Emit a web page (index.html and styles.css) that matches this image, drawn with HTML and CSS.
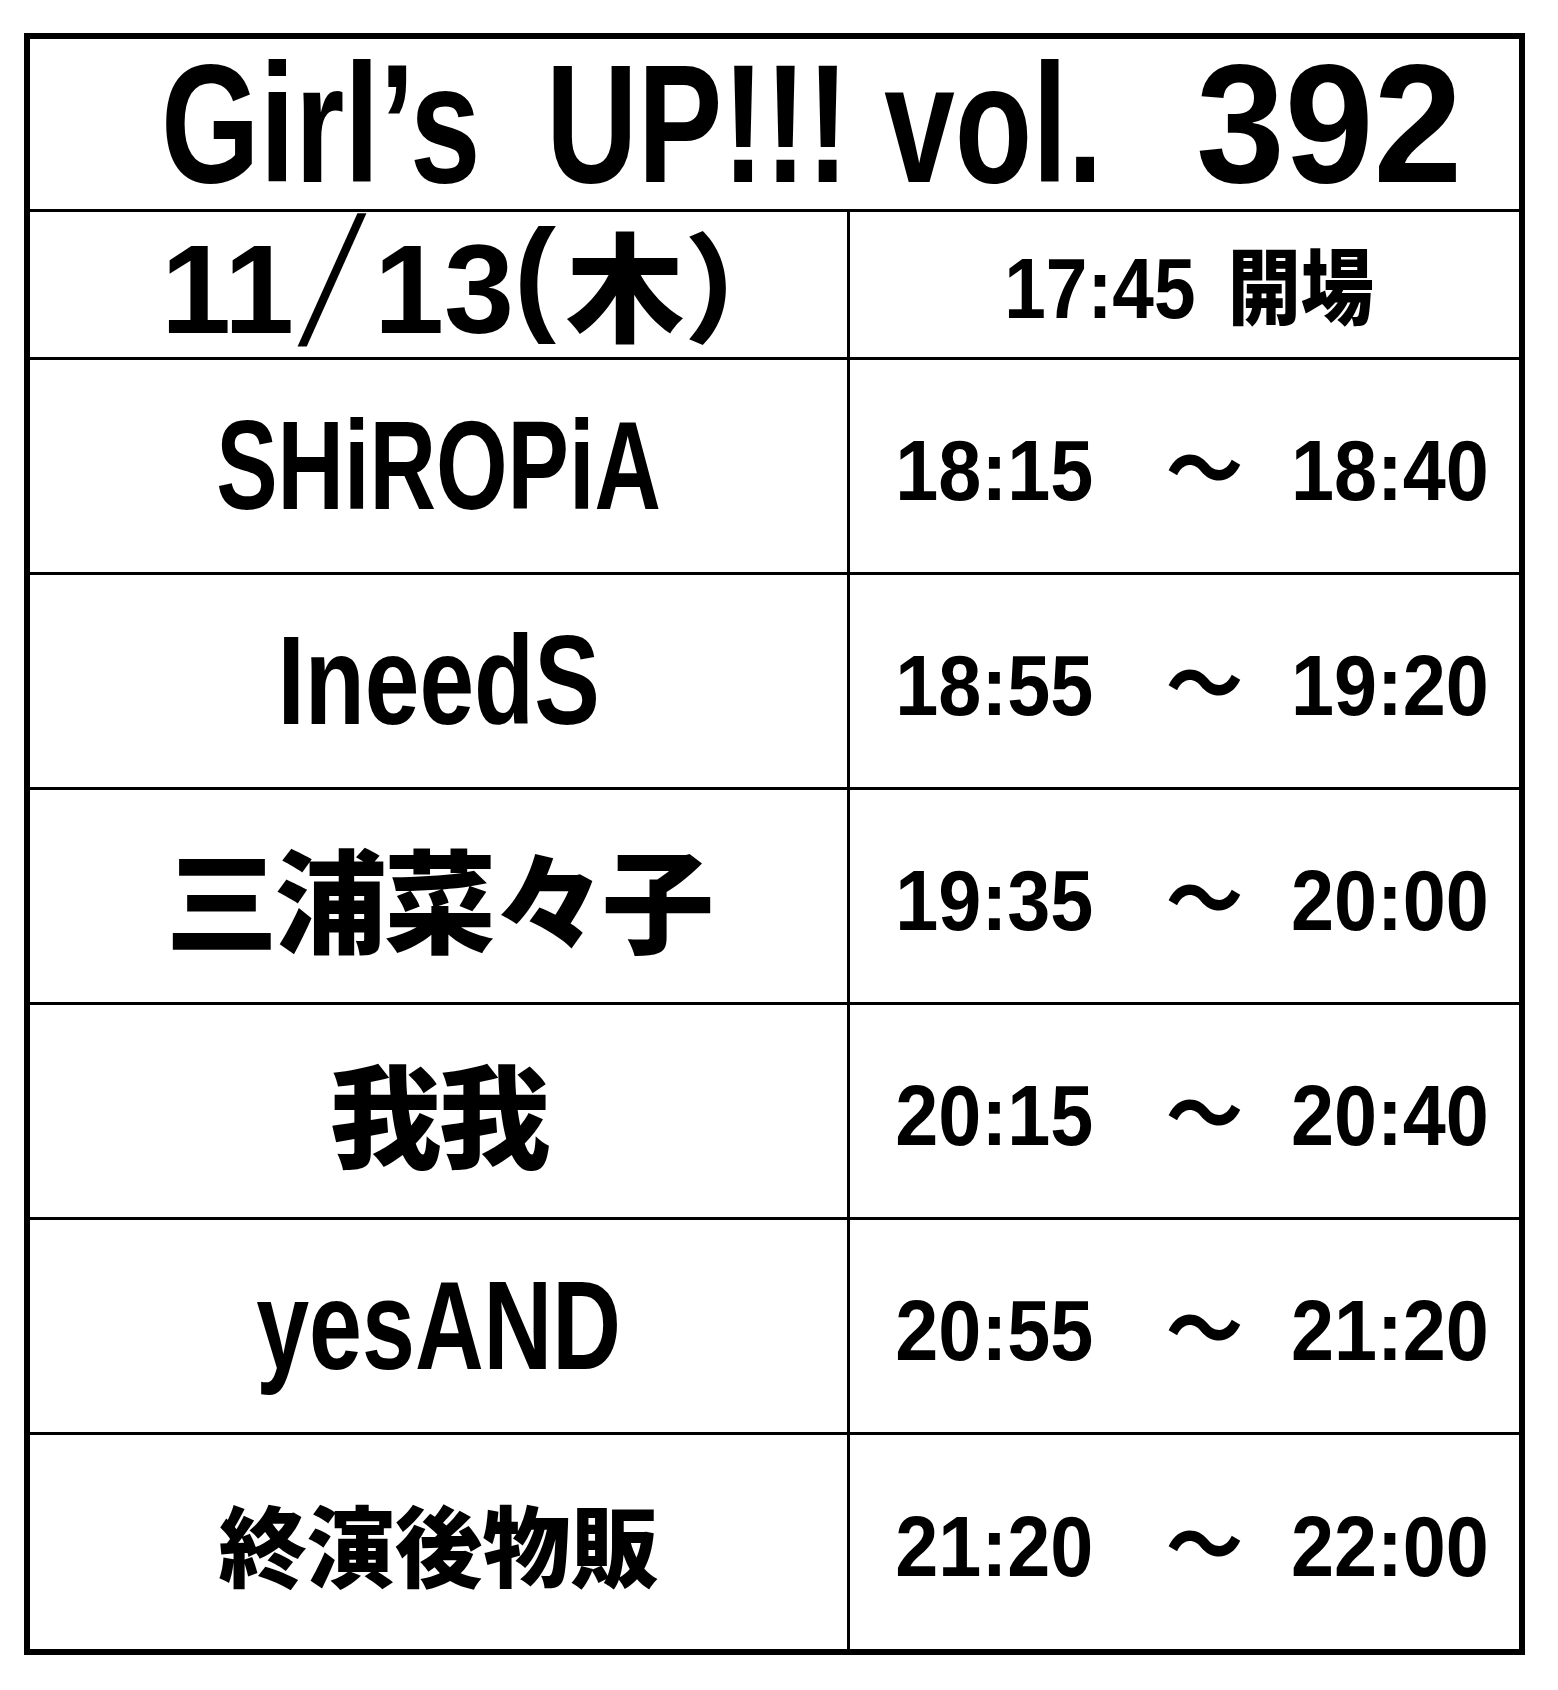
FILE: index.html
```html
<!DOCTYPE html>
<html lang="ja">
<head>
<meta charset="utf-8">
<title>Girl’s UP!!! vol. 392</title>
<link rel="stylesheet" href="styles.css">
</head>
<body>
<div class="sheet">
  <div class="title"><span class="title-main">Girl’s <span class="word-up">UP!!!</span> vol.</span><span class="title-num">392</span></div>
  <div class="row row-date">
    <div class="cell cell-left cell-date"><span class="date">11<span class="slash">/</span>13<span class="paren">(</span><span class="jp day">木）</span></span></div>
    <div class="cell cell-open"><span class="open">17:45 <span class="jp open-jp">開場</span></span></div>
  </div>
  <div class="row">
    <div class="cell cell-left"><span class="name name--tight">SHiROPiA</span></div>
    <div class="cell cell-time"><span class="time"><span>18:15</span> <span class="tilde">～</span> <span>18:40</span></span></div>
  </div>
  <div class="row">
    <div class="cell cell-left"><span class="name">IneedS</span></div>
    <div class="cell cell-time"><span class="time"><span>18:55</span> <span class="tilde">～</span> <span>19:20</span></span></div>
  </div>
  <div class="row">
    <div class="cell cell-left"><span class="name-jp">三浦菜々子</span></div>
    <div class="cell cell-time"><span class="time"><span>19:35</span> <span class="tilde">～</span> <span>20:00</span></span></div>
  </div>
  <div class="row">
    <div class="cell cell-left"><span class="name-jp">我我</span></div>
    <div class="cell cell-time"><span class="time"><span>20:15</span> <span class="tilde">～</span> <span>20:40</span></span></div>
  </div>
  <div class="row">
    <div class="cell cell-left"><span class="name name--mid">yesAND</span></div>
    <div class="cell cell-time"><span class="time"><span>20:55</span> <span class="tilde">～</span> <span>21:20</span></span></div>
  </div>
  <div class="row row-last">
    <div class="cell cell-left"><span class="goods">終演後物販</span></div>
    <div class="cell cell-time"><span class="time"><span>21:20</span> <span class="tilde">～</span> <span>22:00</span></span></div>
  </div>
</div>
</body>
</html>
```

FILE: styles.css
```css
html, body {
  margin: 0;
  padding: 0;
  background: #ffffff;
}

body {
  font-family: "Liberation Sans", Arial, "Noto Sans CJK JP", sans-serif;
  color: #000000;
}

.sheet {
  width: 1501px;
  height: 1622px;
  margin: 33px 0 0 24px;
  border: 6px solid #000000;
  box-sizing: border-box;
  display: flex;
  flex-direction: column;
}

/* ---------- title ---------- */

.title {
  height: 173px;
  flex: none;
  border-bottom: 3px solid #000000;
  box-sizing: border-box;
  display: flex;
  align-items: center;
  justify-content: flex-start;
  padding-left: 131px;
  font-size: 168px;
  font-weight: 700;
  line-height: 1;
  white-space: nowrap;
}

.title-main {
  display: inline-block;
  width: 940px;
  flex: none;
  transform: scaleX(0.755);
  transform-origin: left center;
}

.word-up {
  margin-left: 40px;
}

.title-num {
  display: inline-block;
  flex: none;
  margin-left: 81px;
  transform: scaleX(0.95);
  transform-origin: right center;
}

/* ---------- grid rows ---------- */

.row {
  flex: none;
  height: 215px;
  display: grid;
  grid-template-columns: 820px 1fr;
  border-bottom: 3px solid #000000;
  box-sizing: border-box;
}

.row-date {
  height: 148px;
}

.row-last {
  flex: 1;
  height: auto;
  border-bottom: none;
}

.cell {
  display: flex;
  align-items: center;
  justify-content: center;
  min-width: 0;
}

.cell-left {
  border-right: 3px solid #000000;
}

.cell-date {
  padding-left: 86px;
}

.cell-open {
  padding-left: 10px;
}

.cell-time {
  padding-left: 15px;
}

.jp {
  font-family: "Noto Sans CJK JP", sans-serif;
  font-weight: 900;
}

/* ---------- date ---------- */

.date {
  display: inline-block;
  font-size: 126px;
  font-weight: 700;
  line-height: 1;
  white-space: nowrap;
  padding-bottom: 6px;
}

.date .jp {
  font-size: 118px;
}

.day {
  margin-left: 10px;
}

.slash {
  display: inline-block;
  font-family: "Noto Sans CJK JP", sans-serif;
  font-size: 137px;
  font-weight: 400;
  line-height: 0;
  vertical-align: 11px;
  margin: 0 12px 0 14px;
  transform: skewX(-8deg);
}

.paren {
  vertical-align: 0.12em;
}

/* ---------- doors ---------- */

.open {
  display: inline-block;
  font-size: 85px;
  font-weight: 700;
  line-height: 1;
  white-space: nowrap;
  transform: scaleX(0.88);
}

.open-jp {
  font-size: 83px;
  margin-left: 13px;
}

/* ---------- times ---------- */

.time {
  display: inline-block;
  font-size: 85px;
  font-weight: 700;
  line-height: 1;
  white-space: nowrap;
  transform: scaleX(0.91);
}

.tilde {
  font-family: "Noto Sans CJK JP", sans-serif;
  font-weight: 700;
  margin: 0 29px 0 56px;
}

/* ---------- performers ---------- */

.name {
  display: inline-block;
  font-size: 126px;
  font-weight: 700;
  line-height: 1;
  white-space: nowrap;
  transform: scaleX(0.78);
}

.name--tight {
  transform: scaleX(0.73);
}

.name--mid {
  transform: scaleX(0.755);
}

.name-jp {
  font-family: "Noto Sans CJK JP", sans-serif;
  font-size: 112px;
  font-weight: 900;
  line-height: 1;
  letter-spacing: -3px;
  white-space: nowrap;
}

.goods {
  display: inline-block;
  font-family: "Noto Sans CJK JP", sans-serif;
  font-size: 88px;
  font-weight: 900;
  line-height: 1;
  white-space: nowrap;
}
```
